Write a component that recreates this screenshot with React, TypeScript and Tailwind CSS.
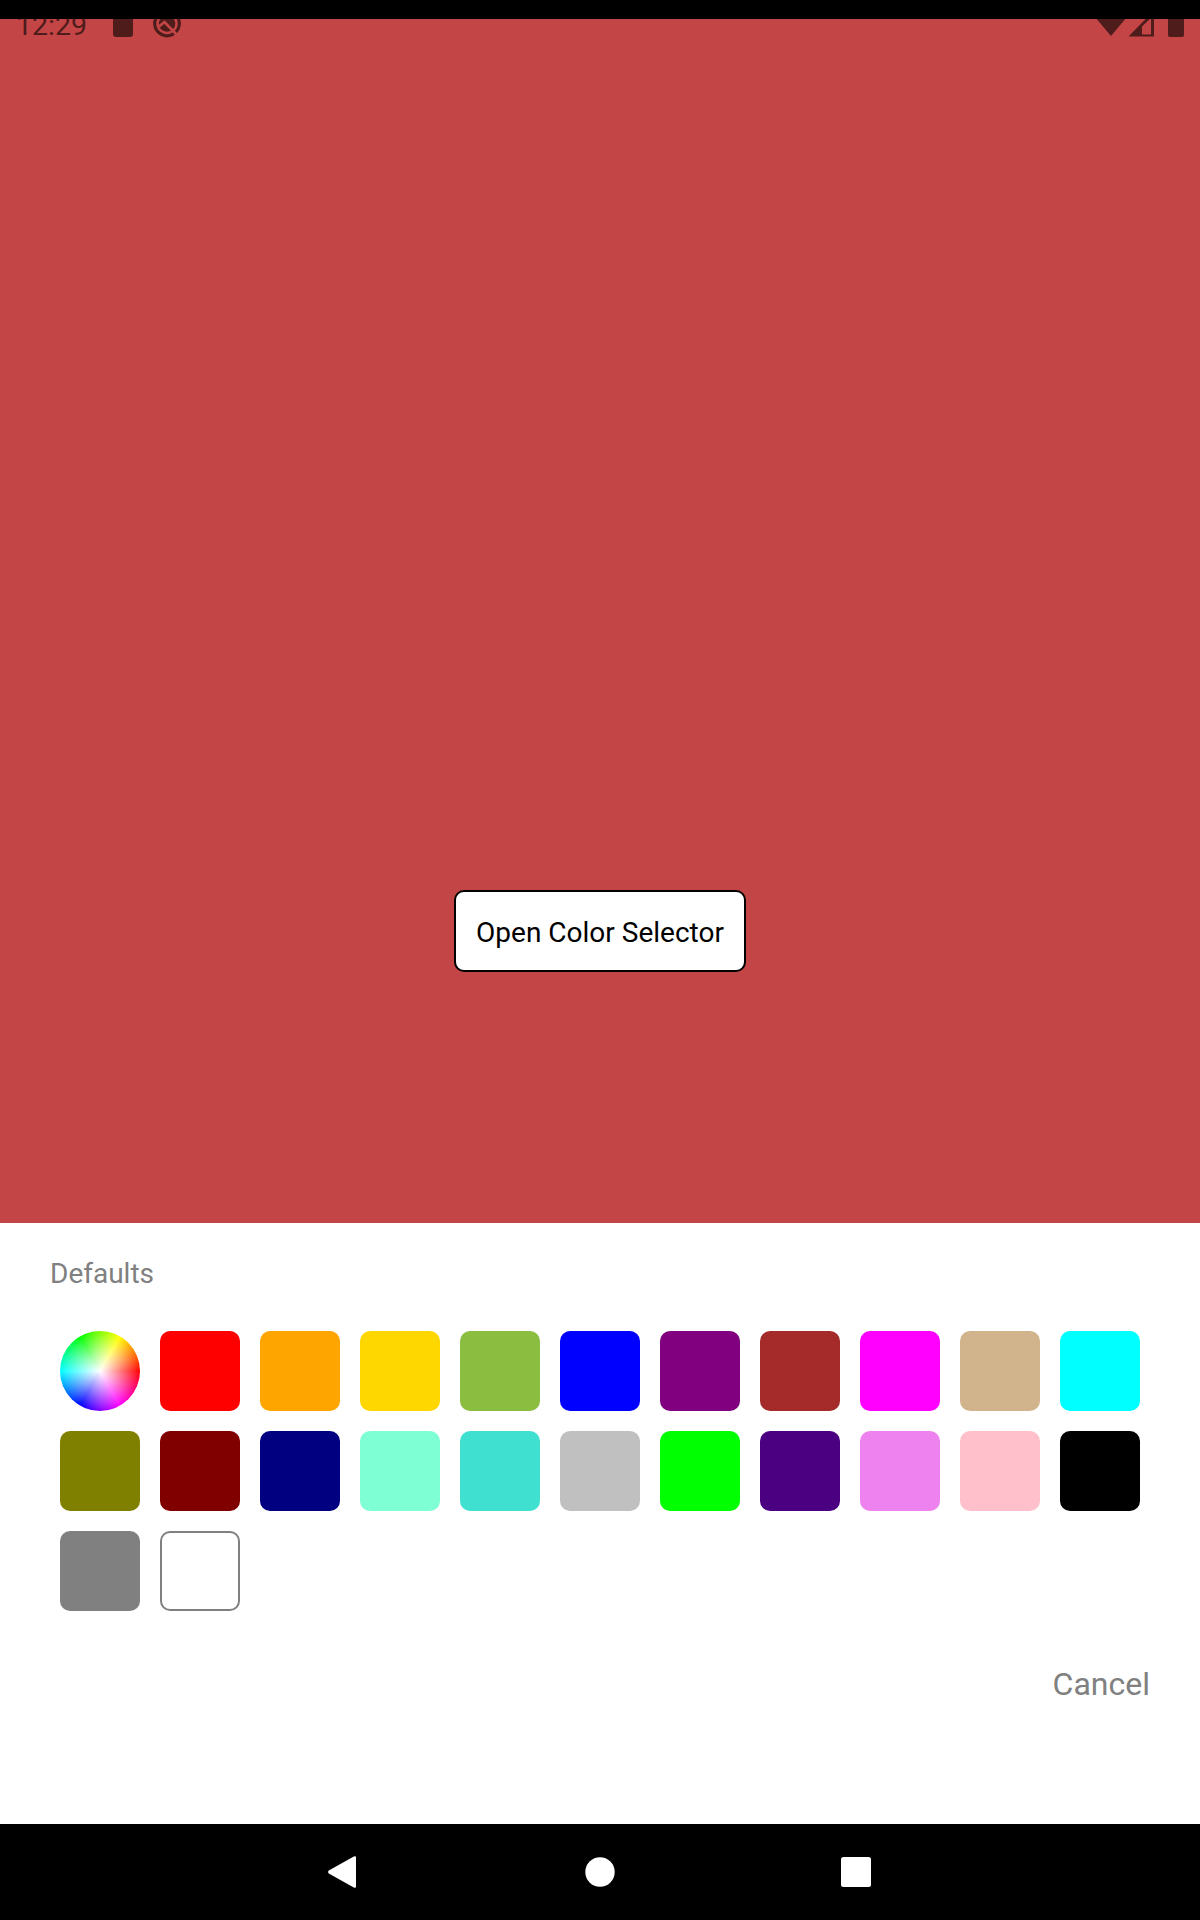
const SWATCHES = [
  "#ff0000", "#ffa500", "#ffd700", "#8bbd41", "#0000ff", "#800080", "#a52a2a", "#ff00ff", "#d2b48c", "#00ffff",
  "#808000", "#800000", "#000080", "#7fffd4", "#40e0d0", "#c0c0c0", "#00ff00", "#4b0082", "#ee82ee", "#ffc0cb",
  "#000000", "#808080",
];

function StatusBar() {
  return (
    <header className="h-12 shrink-0 flex flex-col overflow-hidden relative text-[#4f1c1c]">
      <div className="absolute inset-x-0 top-0 h-[19px] bg-black z-10" />
      <div className="flex items-start justify-between h-12">
        <div className="flex items-start pl-4">
          <span className="w-[97px] pt-[10px] text-[28.5px] leading-8">12:29</span>
          <span className="mt-[11px] w-5 h-[25.5px] rounded-[3px] bg-[#4f1c1c]" />
          <svg className="ml-5 mt-[9px]" width="28" height="29" viewBox="0 0 28 29" fill="none">
            <circle cx="14" cy="14.5" r="12.3" stroke="currentColor" strokeWidth="3.2" />
            <circle cx="14" cy="14.5" r="8.3" fill="currentColor" />
            <path d="M6 17.500L11.500 13L23.500 25.500" stroke="#c44545" strokeWidth="2.600" />
          </svg>
        </div>
        <svg width="104" height="48" viewBox="1096 0 104 48" fill="currentColor">
          <path d="M1090 11h42l-21 25z" />
          <path fillRule="evenodd" d="M1128.500 36.500L1154 10.500V36.500ZM1142 34.500H1151V18L1142 26.500Z" />
          <rect x="1168" y="10" width="16" height="27" rx="2" />
        </svg>
      </div>
    </header>
  );
}

function ColorWheel() {
  return (
    <button
      aria-label="Custom color"
      className="size-20 rounded-full bg-[radial-gradient(circle_closest-side,white,transparent),conic-gradient(from_90deg,#f00,#f0f,#00f,#0ff,#0f0,#ff0,#f00)]"
    />
  );
}

export default function App() {
  return (
    <div className="w-[1200px] h-[1920px] flex flex-col bg-[#c44545] font-[Roboto,sans-serif]">
      <StatusBar />
      <main className="flex-1 flex flex-col items-center justify-end pb-[251px]">
        <button className="w-[292px] h-[82px] rounded-[10px] border-2 border-black bg-white text-black text-[28px] leading-8 whitespace-nowrap pt-1">
          Open Color Selector
        </button>
      </main>
      <section className="h-[601px] shrink-0 bg-white px-[50px] text-[#808080]">
        <h2 className="pt-[35px] text-[28px] leading-8">Defaults</h2>
        <div className="mt-[41px] px-[10px] grid grid-cols-[repeat(11,80px)] gap-5">
          <ColorWheel />
          {SWATCHES.map((color) => (
            <button key={color} aria-label={color} className="size-20 rounded-[10px]" style={{ backgroundColor: color }} />
          ))}
          <button aria-label="#ffffff" className="size-20 rounded-[10px] border-2 border-[#808080] bg-white" />
        </div>
        <div className="mt-[54px] flex justify-end">
          <button className="text-[32px] leading-[38px]">Cancel</button>
        </div>
      </section>
      <nav className="h-24 shrink-0 bg-black flex justify-center pt-8">
        <svg width="544" height="32" viewBox="328 1856 544 32" fill="white">
          <path d="M353.8 1856.6Q356 1855.400 356 1857.600V1886.400Q356 1888.600 353.800 1887.400L328.800 1873.400Q327.400 1872 328.800 1870.600Z" />
          <circle cx="600" cy="1872" r="14.7" />
          <rect x="841" y="1857" width="30" height="30" rx="2.500" />
        </svg>
      </nav>
    </div>
  );
}
